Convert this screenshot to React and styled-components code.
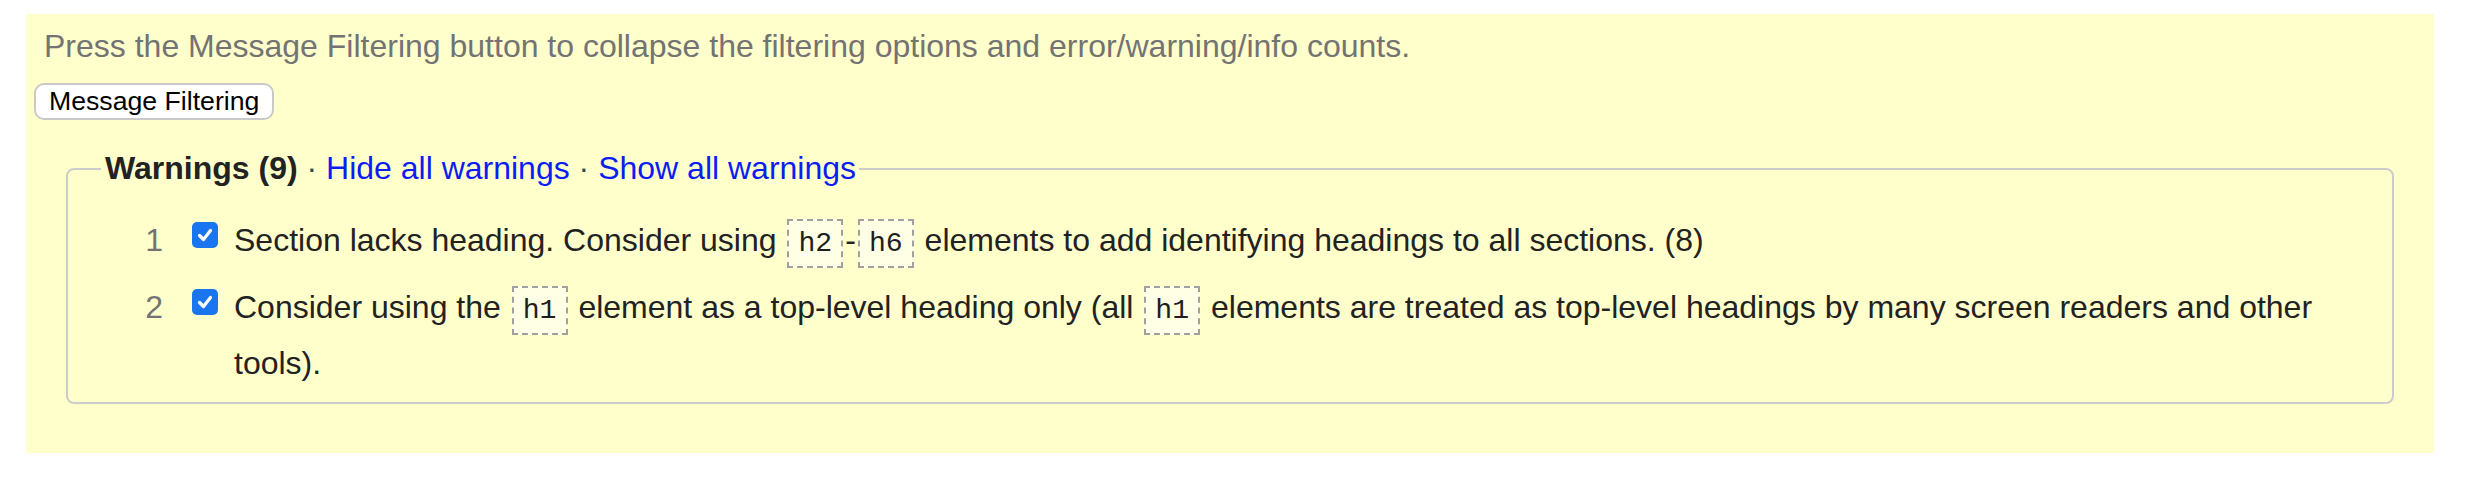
import React from "react";
import styled, { createGlobalStyle } from "styled-components";

const GlobalStyle = createGlobalStyle`
  html, body {
    margin: 0;
    background: #ffffff;
  }
  body {
    font-family: "Liberation Sans", Arial, Helvetica, sans-serif;
    font-size: 32px;
    color: #222222;
  }
`;

const Page = styled.div`
  padding: 14px 32px 0 26px;
`;

const Panel = styled.section`
  background: #ffffcc;
  padding: 12px 8px 49px 8px;
  display: flex;
  flex-direction: column;
  align-items: flex-start;
`;

const Note = styled.p`
  margin: 0;
  padding-left: 10px;
  line-height: 40px;
  color: #737373;
`;

const FilterButton = styled.button`
  margin-top: 17px;
  height: 37px;
  padding: 0 13px;
  font-family: "Liberation Sans", Arial, sans-serif;
  font-size: 26.67px;
  color: #000000;
  background: #ffffff;
  border: 2px solid #c9c9c9;
  border-radius: 10px;
  line-height: 1;
`;

const Fieldset = styled.fieldset`
  align-self: stretch;
  margin: 30px 32px 0 32px;
  padding: 25px 33px 11px 33px;
  border: 2px solid #cccccc;
  border-radius: 8px;
  min-width: 0;
`;

const Legend = styled.legend`
  padding: 0 3px 0 4px;
  line-height: 37px;
  color: #222222;
`;

const Strong = styled.strong`
  font-weight: 700;
`;

const Sep = styled.span`
  color: #444444;
`;

const Action = styled.a`
  color: #0a1df2;
  text-decoration: none;
  cursor: pointer;
`;

const List = styled.ol`
  list-style: none;
  margin: 0;
  padding: 0;
  display: flex;
  flex-direction: column;
  gap: 11px;
`;

const Row = styled.li`
  display: flex;
  align-items: flex-start;
  line-height: 56px;
`;

const Num = styled.span`
  width: 62px;
  flex: none;
  text-align: right;
  color: #737373;
`;

const Check = styled.span`
  flex: none;
  width: 26px;
  height: 26px;
  margin: 10px 0 0 29px;
  border-radius: 5px;
  background: #1a76f0;
  display: flex;
  align-items: center;
  justify-content: center;
`;

const Message = styled.span`
  margin-left: 16px;
  flex: 1;
  min-width: 0;
  color: #222222;
`;

const Code = styled.code`
  font-family: "Liberation Mono", "Courier New", monospace;
  font-size: 0.88em;
  line-height: 1;
  padding: 7px 9px;
  margin: 0 2px;
  border: 2px dashed #a0a0a0;
  background: #ffffe6;
  color: #1e1e1e;
`;

function CheckMark() {
  return (
    <svg width="18" height="18" viewBox="0 0 18 18" aria-hidden="true">
      <polyline
        points="3.5,9.5 7.5,13.5 14.5,4.5"
        fill="none"
        stroke="#ffffff"
        strokeWidth="3.2"
        strokeLinecap="round"
        strokeLinejoin="round"
      />
    </svg>
  );
}

const warnings = [
  {
    id: 1,
    body: (
      <>
        Section lacks heading. Consider using <Code>h2</Code>-<Code>h6</Code> elements to add
        identifying headings to all sections. (8)
      </>
    ),
  },
  {
    id: 2,
    body: (
      <>
        Consider using the <Code>h1</Code> element as a top-level heading only (all <Code>h1</Code>{" "}
        elements are treated as top-level headings by many screen readers and other tools).
      </>
    ),
  },
];

export default function App() {
  return (
    <>
      <GlobalStyle />
      <Page>
        <Panel>
          <Note>
            Press the Message Filtering button to collapse the filtering options and
            error/warning/info counts.
          </Note>
          <FilterButton type="button">Message Filtering</FilterButton>
          <Fieldset>
            <Legend>
              <Strong>Warnings (9)</Strong>
              <Sep> · </Sep>
              <Action>Hide all warnings</Action>
              <Sep> · </Sep>
              <Action>Show all warnings</Action>
            </Legend>
            <List>
              {warnings.map((w) => (
                <Row key={w.id}>
                  <Num>{w.id}</Num>
                  <Check>
                    <CheckMark />
                  </Check>
                  <Message>{w.body}</Message>
                </Row>
              ))}
            </List>
          </Fieldset>
        </Panel>
      </Page>
    </>
  );
}
